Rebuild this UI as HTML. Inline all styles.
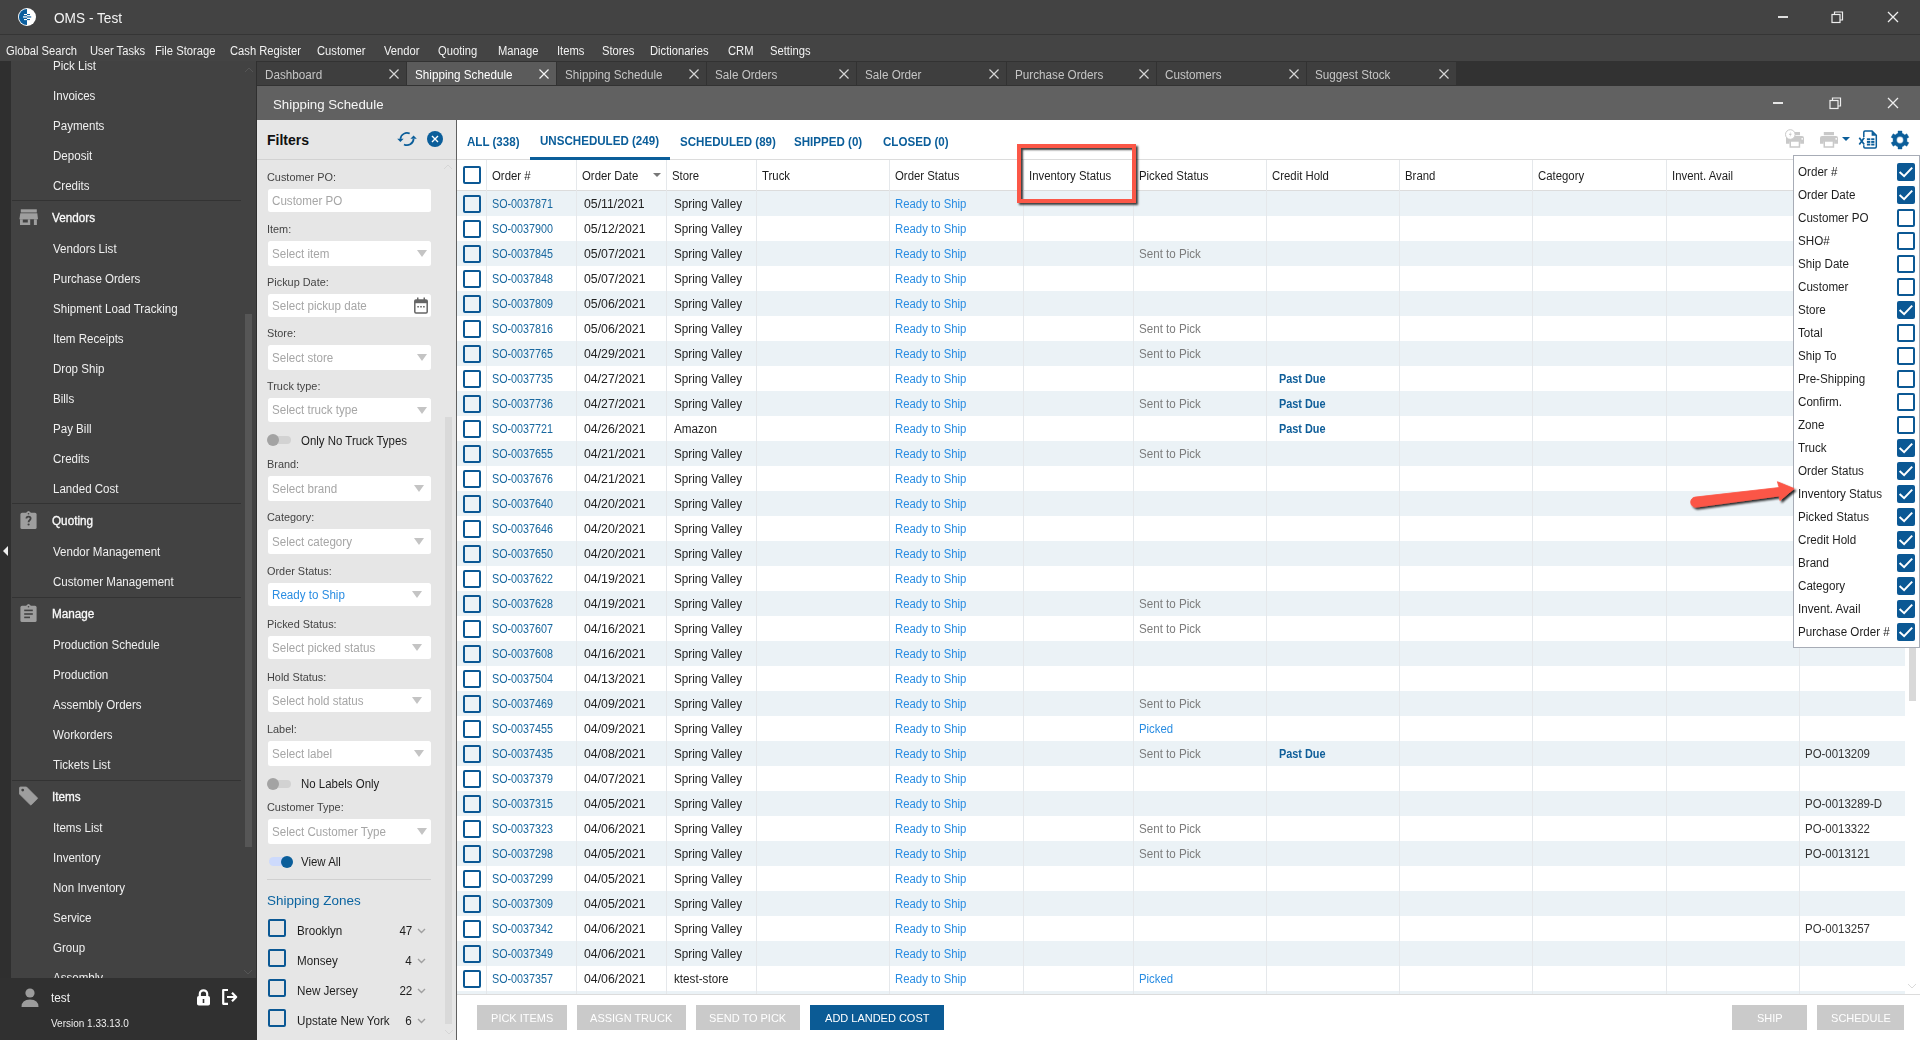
<!DOCTYPE html><html><head><meta charset="utf-8"><title>OMS - Test</title><style>
*{box-sizing:border-box;margin:0;padding:0}
html,body{width:1920px;height:1040px;overflow:hidden;background:#fff}
body{position:relative;font-family:"Liberation Sans",sans-serif;font-size:12px;color:#222}
.a{position:absolute}
.t{position:absolute;white-space:nowrap;line-height:1}
.cb{position:absolute;width:18px;height:18px;border:2px solid #0b5894;border-radius:2px}
.cbx{position:absolute;width:18px;height:18px;background:#0b5894;border-radius:2px}
.dd{position:absolute;width:0;height:0;border-left:5px solid transparent;border-right:5px solid transparent;border-top:7.5px solid #c4c4c4}
.inp{position:absolute;left:267.5px;width:163.5px;height:24px;background:#fff;border-radius:2.5px}
</style></head><body>
<div class="a" style="left:0px;top:61px;width:257px;height:979px;background:#424242;"></div>
<div class="a" style="left:0px;top:61px;width:11px;height:979px;background:#2f2f2f;"></div>
<div class="a" style="left:256px;top:61px;width:1px;height:979px;background:#2f2f2f;"></div>
<div class="t" style="left:53px;top:59.84px;font-size:12px;color:#f0f0f0;transform:scaleX(0.963);transform-origin:0 0;">Pick List</div>
<div class="t" style="left:53px;top:89.84px;font-size:12px;color:#f0f0f0;transform:scaleX(0.963);transform-origin:0 0;">Invoices</div>
<div class="t" style="left:53px;top:119.84px;font-size:12px;color:#f0f0f0;transform:scaleX(0.963);transform-origin:0 0;">Payments</div>
<div class="t" style="left:53px;top:149.84px;font-size:12px;color:#f0f0f0;transform:scaleX(0.963);transform-origin:0 0;">Deposit</div>
<div class="t" style="left:53px;top:179.84px;font-size:12px;color:#f0f0f0;transform:scaleX(0.963);transform-origin:0 0;">Credits</div>
<div class="t" style="left:53px;top:242.84px;font-size:12px;color:#f0f0f0;transform:scaleX(0.963);transform-origin:0 0;">Vendors List</div>
<div class="t" style="left:53px;top:272.84px;font-size:12px;color:#f0f0f0;transform:scaleX(0.963);transform-origin:0 0;">Purchase Orders</div>
<div class="t" style="left:53px;top:302.84px;font-size:12px;color:#f0f0f0;transform:scaleX(0.963);transform-origin:0 0;">Shipment Load Tracking</div>
<div class="t" style="left:53px;top:332.84px;font-size:12px;color:#f0f0f0;transform:scaleX(0.963);transform-origin:0 0;">Item Receipts</div>
<div class="t" style="left:53px;top:362.84px;font-size:12px;color:#f0f0f0;transform:scaleX(0.963);transform-origin:0 0;">Drop Ship</div>
<div class="t" style="left:53px;top:392.84px;font-size:12px;color:#f0f0f0;transform:scaleX(0.963);transform-origin:0 0;">Bills</div>
<div class="t" style="left:53px;top:422.84px;font-size:12px;color:#f0f0f0;transform:scaleX(0.963);transform-origin:0 0;">Pay Bill</div>
<div class="t" style="left:53px;top:452.84px;font-size:12px;color:#f0f0f0;transform:scaleX(0.963);transform-origin:0 0;">Credits</div>
<div class="t" style="left:53px;top:482.84px;font-size:12px;color:#f0f0f0;transform:scaleX(0.963);transform-origin:0 0;">Landed Cost</div>
<div class="t" style="left:53px;top:545.84px;font-size:12px;color:#f0f0f0;transform:scaleX(0.963);transform-origin:0 0;">Vendor Management</div>
<div class="t" style="left:53px;top:575.84px;font-size:12px;color:#f0f0f0;transform:scaleX(0.963);transform-origin:0 0;">Customer Management</div>
<div class="t" style="left:53px;top:638.84px;font-size:12px;color:#f0f0f0;transform:scaleX(0.963);transform-origin:0 0;">Production Schedule</div>
<div class="t" style="left:53px;top:668.84px;font-size:12px;color:#f0f0f0;transform:scaleX(0.963);transform-origin:0 0;">Production</div>
<div class="t" style="left:53px;top:698.84px;font-size:12px;color:#f0f0f0;transform:scaleX(0.963);transform-origin:0 0;">Assembly Orders</div>
<div class="t" style="left:53px;top:728.84px;font-size:12px;color:#f0f0f0;transform:scaleX(0.963);transform-origin:0 0;">Workorders</div>
<div class="t" style="left:53px;top:758.84px;font-size:12px;color:#f0f0f0;transform:scaleX(0.963);transform-origin:0 0;">Tickets List</div>
<div class="t" style="left:53px;top:821.84px;font-size:12px;color:#f0f0f0;transform:scaleX(0.963);transform-origin:0 0;">Items List</div>
<div class="t" style="left:53px;top:851.84px;font-size:12px;color:#f0f0f0;transform:scaleX(0.963);transform-origin:0 0;">Inventory</div>
<div class="t" style="left:53px;top:881.84px;font-size:12px;color:#f0f0f0;transform:scaleX(0.963);transform-origin:0 0;">Non Inventory</div>
<div class="t" style="left:53px;top:911.84px;font-size:12px;color:#f0f0f0;transform:scaleX(0.963);transform-origin:0 0;">Service</div>
<div class="t" style="left:53px;top:941.84px;font-size:12px;color:#f0f0f0;transform:scaleX(0.963);transform-origin:0 0;">Group</div>
<div class="t" style="left:53px;top:971.84px;font-size:12px;color:#f0f0f0;transform:scaleX(0.963);transform-origin:0 0;">Assembly</div>
<div class="a" style="left:12px;top:200px;width:229px;height:1px;background:#333333;"></div>
<div class="a" style="left:12px;top:503px;width:229px;height:1px;background:#333333;"></div>
<div class="a" style="left:12px;top:597px;width:229px;height:1px;background:#333333;"></div>
<div class="a" style="left:12px;top:780px;width:229px;height:1px;background:#333333;"></div>
<div class="t" style="left:52px;top:211.84px;font-size:12px;color:#fafafa;transform:scaleX(0.977);transform-origin:0 0;-webkit-text-stroke:0.3px #fafafa;">Vendors</div>
<div class="t" style="left:52px;top:514.84px;font-size:12px;color:#fafafa;transform:scaleX(0.977);transform-origin:0 0;-webkit-text-stroke:0.3px #fafafa;">Quoting</div>
<div class="t" style="left:52px;top:607.84px;font-size:12px;color:#fafafa;transform:scaleX(0.977);transform-origin:0 0;-webkit-text-stroke:0.3px #fafafa;">Manage</div>
<div class="t" style="left:52px;top:790.84px;font-size:12px;color:#fafafa;transform:scaleX(0.977);transform-origin:0 0;-webkit-text-stroke:0.3px #fafafa;">Items</div>
<svg class="a" style="left:19px;top:209px" width="20" height="17" viewBox="0 0 20 17"><rect x="1.8" y="0.3" width="16" height="3.2" fill="#9e9e9e"/><path d="M1.3 4.2 H18.3 L19 10.3 H0.4 Z" fill="#9e9e9e"/><path d="M1 10.3 H11.2 V16 H1 Z M3.8 10.6 V13.6 H8.8 V10.6 Z" fill="#9e9e9e" fill-rule="evenodd"/><rect x="14.9" y="10.3" width="3" height="5.7" fill="#9e9e9e"/></svg>
<svg class="a" style="left:20px;top:511px" width="18" height="19" viewBox="0 0 18 19"><rect x="0.4" y="1.8" width="16.2" height="16.2" rx="1.6" fill="#9e9e9e"/><path d="M5.8 2.5 Q7 0 8.5 0 Q10 0 11.2 2.5 Z" fill="#9e9e9e"/><circle cx="8.5" cy="2.7" r="0.8" fill="#424242"/><path d="M6.4 7.6 Q6.4 5.6 8.5 5.6 Q10.6 5.6 10.6 7.5 Q10.6 8.7 9.4 9.4 Q8.6 9.9 8.6 11.2" fill="none" stroke="#424242" stroke-width="1.8"/><circle cx="8.6" cy="13.5" r="1.1" fill="#424242"/></svg>
<svg class="a" style="left:20px;top:604px" width="18" height="19" viewBox="0 0 18 19"><rect x="0.4" y="1.8" width="16.2" height="16.2" rx="1.6" fill="#9e9e9e"/><path d="M5.8 2.5 Q7 0 8.5 0 Q10 0 11.2 2.5 Z" fill="#9e9e9e"/><circle cx="8.5" cy="2.7" r="0.8" fill="#424242"/><rect x="4.2" y="5.6" width="8.6" height="1.6" fill="#424242"/><rect x="4.2" y="9.2" width="8.6" height="1.6" fill="#424242"/><rect x="4.2" y="12.6" width="5.8" height="1.6" fill="#424242"/></svg>
<svg class="a" style="left:18px;top:786px" width="21" height="21" viewBox="0 0 21 21"><path d="M1.5 2 Q1.5 1 2.5 1 L8.5 1 L19.3 11.8 Q19.8 12.3 19.3 12.8 L13.3 18.8 Q12.8 19.3 12.3 18.8 L1.5 8 Z" fill="#9e9e9e" stroke="#9e9e9e" stroke-width="0.8" stroke-linejoin="round"/><circle cx="4.7" cy="4.1" r="1.4" fill="#424242"/></svg>
<div class="a" style="left:245px;top:314px;width:7px;height:533px;background:#565656;"></div>
<svg class="a" style="left:244px;top:67px" width="10" height="6" viewBox="0 0 10 6"><path d="M1 5 L5 1 L9 5" fill="none" stroke="#555" stroke-width="1"/></svg>
<svg class="a" style="left:243px;top:969px" width="10" height="6" viewBox="0 0 10 6"><path d="M1 1 L5 5 L9 1" fill="none" stroke="#555" stroke-width="1"/></svg>
<div class="a" style="left:3px;top:546px;width:0;height:0;border-top:5px solid transparent;border-bottom:5px solid transparent;border-right:5px solid #f0f0f0"></div>
<div class="a" style="left:0px;top:978px;width:256px;height:62px;background:#303030;"></div>
<svg class="a" style="left:20px;top:988px" width="20" height="19" viewBox="0 0 20 19"><circle cx="10" cy="5" r="4.6" fill="#9c9c9c"/><path d="M1.5 19 Q1.5 11.5 10 11.5 Q18.5 11.5 18.5 19 Z" fill="#9c9c9c"/></svg>
<div class="t" style="left:51px;top:991.84px;font-size:12px;color:#f2f2f2;transform:scaleX(0.982);transform-origin:0 0;">test</div>
<svg class="a" style="left:196px;top:989px" width="15" height="17" viewBox="0 0 15 17"><path d="M3.8 7.5 V5 A3.7 3.7 0 0 1 11.2 5 V7.5" fill="none" stroke="#fff" stroke-width="2.2"/><rect x="1" y="7" width="13" height="9.5" rx="1.8" fill="#fff"/><rect x="6.7" y="10" width="1.6" height="4" fill="#303030"/></svg>
<svg class="a" style="left:221px;top:988px" width="18" height="18" viewBox="0 0 18 18"><path d="M7 2 H2.2 V15.8 H7" fill="none" stroke="#fff" stroke-width="2.2" stroke-linejoin="round"/><path d="M6 9 H15 M11 4.8 L15.2 9 L11 13.2" fill="none" stroke="#fff" stroke-width="2.2" stroke-linejoin="round"/></svg>
<div class="t" style="left:51px;top:1017.69px;font-size:11px;color:#eeeeee;transform:scaleX(0.908);transform-origin:0 0;">Version 1.33.13.0</div>
<div class="a" style="left:0px;top:0px;width:1920px;height:34px;background:#434343;"></div>
<div class="a" style="left:0px;top:34px;width:1920px;height:1px;background:#353535;"></div>
<div class="a" style="left:0px;top:35px;width:1920px;height:26px;background:#444444;"></div>
<svg class="a" style="left:17px;top:7px" width="20" height="20" viewBox="0 0 20 20">
<circle cx="10" cy="10" r="9" fill="#fff"/>
<path d="M10 1.9 A8.1 8.1 0 0 0 10 18.1 Z" fill="#0b5e9e"/>
<rect x="7" y="7" width="3" height="1.1" fill="#fff"/><rect x="6" y="9.2" width="4" height="1.5" fill="#dbe7f0"/><rect x="7" y="12" width="3" height="1.1" fill="#fff"/>
<rect x="10" y="7" width="3" height="1.1" fill="#0b5e9e"/><rect x="10" y="9.2" width="4.2" height="1.5" fill="#3d7fb3"/><rect x="10" y="12" width="3" height="1.1" fill="#0b5e9e"/>
</svg>
<div class="t" style="left:54px;top:11.15px;font-size:14px;color:#f4f4f4;transform:scaleX(0.975);transform-origin:0 0;">OMS - Test</div>
<div class="a" style="left:1778px;top:16px;width:10px;height:1.5px;background:#dedede;"></div>
<svg class="a" style="left:1831px;top:11px" width="13" height="13" viewBox="0 0 13 13"><rect x="1" y="3.5" width="8" height="8" fill="none" stroke="#eee" stroke-width="1.2"/><path d="M3.5 3.5 V1 H11.5 V9 H9" fill="none" stroke="#eee" stroke-width="1.2"/></svg>
<svg class="a" style="left:1887px;top:11px" width="12" height="12" viewBox="0 0 12 12"><path d="M1 1 L11 11 M11 1 L1 11" stroke="#eee" stroke-width="1.3"/></svg>
<div class="t" style="left:6px;top:44.84px;font-size:12px;color:#f2f2f2;transform:scaleX(0.934);transform-origin:0 0;">Global Search</div>
<div class="t" style="left:90px;top:44.84px;font-size:12px;color:#f2f2f2;transform:scaleX(0.934);transform-origin:0 0;">User Tasks</div>
<div class="t" style="left:155px;top:44.84px;font-size:12px;color:#f2f2f2;transform:scaleX(0.934);transform-origin:0 0;">File Storage</div>
<div class="t" style="left:230px;top:44.84px;font-size:12px;color:#f2f2f2;transform:scaleX(0.934);transform-origin:0 0;">Cash Register</div>
<div class="t" style="left:317px;top:44.84px;font-size:12px;color:#f2f2f2;transform:scaleX(0.934);transform-origin:0 0;">Customer</div>
<div class="t" style="left:384px;top:44.84px;font-size:12px;color:#f2f2f2;transform:scaleX(0.934);transform-origin:0 0;">Vendor</div>
<div class="t" style="left:438px;top:44.84px;font-size:12px;color:#f2f2f2;transform:scaleX(0.934);transform-origin:0 0;">Quoting</div>
<div class="t" style="left:498px;top:44.84px;font-size:12px;color:#f2f2f2;transform:scaleX(0.934);transform-origin:0 0;">Manage</div>
<div class="t" style="left:557px;top:44.84px;font-size:12px;color:#f2f2f2;transform:scaleX(0.934);transform-origin:0 0;">Items</div>
<div class="t" style="left:602px;top:44.84px;font-size:12px;color:#f2f2f2;transform:scaleX(0.934);transform-origin:0 0;">Stores</div>
<div class="t" style="left:650px;top:44.84px;font-size:12px;color:#f2f2f2;transform:scaleX(0.934);transform-origin:0 0;">Dictionaries</div>
<div class="t" style="left:728px;top:44.84px;font-size:12px;color:#f2f2f2;transform:scaleX(0.934);transform-origin:0 0;">CRM</div>
<div class="t" style="left:770px;top:44.84px;font-size:12px;color:#f2f2f2;transform:scaleX(0.934);transform-origin:0 0;">Settings</div>
<div class="a" style="left:257px;top:61px;width:1663px;height:25px;background:#323232;"></div>
<div class="a" style="left:257px;top:62px;width:149px;height:23px;background:#3e3e3e;"></div>
<div class="t" style="left:265px;top:68.84px;font-size:12px;color:#c6c6c6;transform:scaleX(0.974);transform-origin:0 0;">Dashboard</div>
<svg class="a" style="left:389px;top:69px" width="10" height="10" viewBox="0 0 10 10"><path d="M0.5 0.5 L9.5 9.5 M9.5 0.5 L0.5 9.5" stroke="#d6d6d6" stroke-width="1.2"/></svg>
<div class="a" style="left:407px;top:62px;width:149px;height:23px;background:#5b5b5b;"></div>
<div class="t" style="left:415px;top:68.84px;font-size:12px;color:#ffffff;transform:scaleX(0.974);transform-origin:0 0;">Shipping Schedule</div>
<svg class="a" style="left:539px;top:69px" width="10" height="10" viewBox="0 0 10 10"><path d="M0.5 0.5 L9.5 9.5 M9.5 0.5 L0.5 9.5" stroke="#f4f4f4" stroke-width="1.2"/></svg>
<div class="a" style="left:557px;top:62px;width:149px;height:23px;background:#3e3e3e;"></div>
<div class="t" style="left:565px;top:68.84px;font-size:12px;color:#c6c6c6;transform:scaleX(0.974);transform-origin:0 0;">Shipping Schedule</div>
<svg class="a" style="left:689px;top:69px" width="10" height="10" viewBox="0 0 10 10"><path d="M0.5 0.5 L9.5 9.5 M9.5 0.5 L0.5 9.5" stroke="#d6d6d6" stroke-width="1.2"/></svg>
<div class="a" style="left:707px;top:62px;width:149px;height:23px;background:#3e3e3e;"></div>
<div class="t" style="left:715px;top:68.84px;font-size:12px;color:#c6c6c6;transform:scaleX(0.974);transform-origin:0 0;">Sale Orders</div>
<svg class="a" style="left:839px;top:69px" width="10" height="10" viewBox="0 0 10 10"><path d="M0.5 0.5 L9.5 9.5 M9.5 0.5 L0.5 9.5" stroke="#d6d6d6" stroke-width="1.2"/></svg>
<div class="a" style="left:857px;top:62px;width:149px;height:23px;background:#3e3e3e;"></div>
<div class="t" style="left:865px;top:68.84px;font-size:12px;color:#c6c6c6;transform:scaleX(0.974);transform-origin:0 0;">Sale Order</div>
<svg class="a" style="left:989px;top:69px" width="10" height="10" viewBox="0 0 10 10"><path d="M0.5 0.5 L9.5 9.5 M9.5 0.5 L0.5 9.5" stroke="#d6d6d6" stroke-width="1.2"/></svg>
<div class="a" style="left:1007px;top:62px;width:149px;height:23px;background:#3e3e3e;"></div>
<div class="t" style="left:1015px;top:68.84px;font-size:12px;color:#c6c6c6;transform:scaleX(0.974);transform-origin:0 0;">Purchase Orders</div>
<svg class="a" style="left:1139px;top:69px" width="10" height="10" viewBox="0 0 10 10"><path d="M0.5 0.5 L9.5 9.5 M9.5 0.5 L0.5 9.5" stroke="#d6d6d6" stroke-width="1.2"/></svg>
<div class="a" style="left:1157px;top:62px;width:149px;height:23px;background:#3e3e3e;"></div>
<div class="t" style="left:1165px;top:68.84px;font-size:12px;color:#c6c6c6;transform:scaleX(0.974);transform-origin:0 0;">Customers</div>
<svg class="a" style="left:1289px;top:69px" width="10" height="10" viewBox="0 0 10 10"><path d="M0.5 0.5 L9.5 9.5 M9.5 0.5 L0.5 9.5" stroke="#d6d6d6" stroke-width="1.2"/></svg>
<div class="a" style="left:1307px;top:62px;width:149px;height:23px;background:#3e3e3e;"></div>
<div class="t" style="left:1315px;top:68.84px;font-size:12px;color:#c6c6c6;transform:scaleX(0.974);transform-origin:0 0;">Suggest Stock</div>
<svg class="a" style="left:1439px;top:69px" width="10" height="10" viewBox="0 0 10 10"><path d="M0.5 0.5 L9.5 9.5 M9.5 0.5 L0.5 9.5" stroke="#d6d6d6" stroke-width="1.2"/></svg>
<div class="a" style="left:257px;top:86px;width:1663px;height:34px;background:#616161;"></div>
<div class="t" style="left:273px;top:97.74px;font-size:13.3px;color:#f6f6f6;transform:scaleX(0.997);transform-origin:0 0;">Shipping Schedule</div>
<div class="a" style="left:1773px;top:102px;width:10px;height:1.5px;background:#e6e6e6;"></div>
<svg class="a" style="left:1829px;top:97px" width="13" height="13" viewBox="0 0 13 13"><rect x="1" y="3.5" width="8" height="8" fill="none" stroke="#eee" stroke-width="1.2"/><path d="M3.5 3.5 V1 H11.5 V9 H9" fill="none" stroke="#eee" stroke-width="1.2"/></svg>
<svg class="a" style="left:1887px;top:97px" width="12" height="12" viewBox="0 0 12 12"><path d="M1 1 L11 11 M11 1 L1 11" stroke="#eee" stroke-width="1.3"/></svg>
<div class="a" style="left:257px;top:120px;width:199px;height:920px;background:#e6e6e6;"></div>
<div class="a" style="left:456px;top:120px;width:1px;height:920px;background:#606060;"></div>
<div class="t" style="left:267px;top:133.15px;font-size:14px;color:#111111;font-weight:bold;transform:scaleX(1.000);transform-origin:0 0;">Filters</div>
<svg class="a" style="left:397px;top:131px" width="20" height="16" viewBox="0 0 20 16">
<path d="M12.7 2.6 A6.6 6.6 0 0 0 3.4 7.9" fill="none" stroke="#0b5e9a" stroke-width="1.7"/>
<path d="M0.2 7.8 L6.6 7.8 L3.4 11.1 Z" fill="#0b5e9a"/>
<path d="M7 13.4 A6.6 6.6 0 0 0 16.6 7.9" fill="none" stroke="#0b5e9a" stroke-width="1.7"/>
<path d="M13.4 7.7 L19.8 7.7 L16.6 4.5 Z" fill="#0b5e9a"/>
</svg>
<svg class="a" style="left:427px;top:131px" width="16" height="16" viewBox="0 0 16 16"><circle cx="8" cy="8" r="8" fill="#0b5e9a"/><path d="M5 5 L11 11 M11 5 L5 11" stroke="#fff" stroke-width="1.4"/></svg>
<div class="a" style="left:257px;top:159px;width:199px;height:1px;background:#d2d2d2;"></div>
<svg class="a" style="left:443px;top:164px" width="10" height="6" viewBox="0 0 10 6"><path d="M1 5 L5 1 L9 5" fill="none" stroke="#d6d6d6" stroke-width="1"/></svg>
<div class="a" style="left:445px;top:417px;width:7px;height:607px;background:#d9d9d9;"></div>
<svg class="a" style="left:444px;top:1029px" width="10" height="6" viewBox="0 0 10 6"><path d="M1 1 L5 5 L9 1" fill="none" stroke="#d6d6d6" stroke-width="1"/></svg>
<div class="t" style="left:267px;top:172.19px;font-size:11px;color:#444444;transform:scaleX(0.990);transform-origin:0 0;">Customer PO:</div>
<div class="inp" style="top:189px;height:23px"></div>
<div class="t" style="left:272px;top:194.84px;font-size:12px;color:#a6a6a6;transform:scaleX(0.967);transform-origin:0 0;">Customer PO</div>
<div class="t" style="left:267px;top:224.19px;font-size:11px;color:#444444;transform:scaleX(0.990);transform-origin:0 0;">Item:</div>
<div class="inp" style="top:241px;height:25px"></div>
<div class="t" style="left:272px;top:247.84px;font-size:12px;color:#a6a6a6;transform:scaleX(0.967);transform-origin:0 0;">Select item</div>
<div class="dd" style="left:417px;top:250.0px"></div>
<div class="t" style="left:267px;top:277.19px;font-size:11px;color:#444444;transform:scaleX(0.990);transform-origin:0 0;">Pickup Date:</div>
<div class="inp" style="top:294px;height:23px"></div>
<div class="t" style="left:272px;top:299.84px;font-size:12px;color:#a6a6a6;transform:scaleX(0.967);transform-origin:0 0;">Select pickup date</div>
<svg class="a" style="left:414px;top:297px" width="14" height="17" viewBox="0 0 14 17"><rect x="0.8" y="3" width="12.4" height="13" rx="1.2" fill="none" stroke="#666" stroke-width="1.5"/><rect x="0.8" y="3" width="12.4" height="3.2" fill="#666"/><rect x="3" y="0.5" width="1.5" height="3.5" fill="#666"/><rect x="9.5" y="0.5" width="1.5" height="3.5" fill="#666"/><rect x="3.3" y="9" width="1.6" height="1.5" fill="#666"/><rect x="6.2" y="9" width="1.6" height="1.5" fill="#666"/><rect x="9.1" y="9" width="1.6" height="1.5" fill="#666"/></svg>
<div class="t" style="left:267px;top:328.19px;font-size:11px;color:#444444;transform:scaleX(0.990);transform-origin:0 0;">Store:</div>
<div class="inp" style="top:345px;height:25px"></div>
<div class="t" style="left:272px;top:351.84px;font-size:12px;color:#a6a6a6;transform:scaleX(0.967);transform-origin:0 0;">Select store</div>
<div class="dd" style="left:417px;top:354.0px"></div>
<div class="t" style="left:267px;top:381.19px;font-size:11px;color:#444444;transform:scaleX(0.990);transform-origin:0 0;">Truck type:</div>
<div class="inp" style="top:398px;height:24px"></div>
<div class="t" style="left:272px;top:404.34px;font-size:12px;color:#a6a6a6;transform:scaleX(0.967);transform-origin:0 0;">Select truck type</div>
<div class="dd" style="left:417px;top:406.5px"></div>
<div class="t" style="left:267px;top:459.19px;font-size:11px;color:#444444;transform:scaleX(0.990);transform-origin:0 0;">Brand:</div>
<div class="inp" style="top:476px;height:25px"></div>
<div class="t" style="left:272px;top:482.84px;font-size:12px;color:#a6a6a6;transform:scaleX(0.967);transform-origin:0 0;">Select brand</div>
<div class="dd" style="left:413.5px;top:485.0px"></div>
<div class="t" style="left:267px;top:512.19px;font-size:11px;color:#444444;transform:scaleX(0.990);transform-origin:0 0;">Category:</div>
<div class="inp" style="top:529px;height:25px"></div>
<div class="t" style="left:272px;top:535.84px;font-size:12px;color:#a6a6a6;transform:scaleX(0.967);transform-origin:0 0;">Select category</div>
<div class="dd" style="left:413.5px;top:538.0px"></div>
<div class="t" style="left:267px;top:566.19px;font-size:11px;color:#444444;transform:scaleX(0.990);transform-origin:0 0;">Order Status:</div>
<div class="inp" style="top:583px;height:23px"></div>
<div class="t" style="left:272px;top:588.84px;font-size:12px;color:#2a8de2;transform:scaleX(0.967);transform-origin:0 0;">Ready to Ship</div>
<div class="dd" style="left:412.3px;top:591.0px"></div>
<div class="t" style="left:267px;top:619.19px;font-size:11px;color:#444444;transform:scaleX(0.990);transform-origin:0 0;">Picked Status:</div>
<div class="inp" style="top:636px;height:23px"></div>
<div class="t" style="left:272px;top:641.84px;font-size:12px;color:#a6a6a6;transform:scaleX(0.967);transform-origin:0 0;">Select picked status</div>
<div class="dd" style="left:412.3px;top:644.0px"></div>
<div class="t" style="left:267px;top:672.19px;font-size:11px;color:#444444;transform:scaleX(0.990);transform-origin:0 0;">Hold Status:</div>
<div class="inp" style="top:689px;height:23px"></div>
<div class="t" style="left:272px;top:694.84px;font-size:12px;color:#a6a6a6;transform:scaleX(0.967);transform-origin:0 0;">Select hold status</div>
<div class="dd" style="left:412.3px;top:697.0px"></div>
<div class="t" style="left:267px;top:724.19px;font-size:11px;color:#444444;transform:scaleX(0.990);transform-origin:0 0;">Label:</div>
<div class="inp" style="top:741px;height:25px"></div>
<div class="t" style="left:272px;top:747.84px;font-size:12px;color:#a6a6a6;transform:scaleX(0.967);transform-origin:0 0;">Select label</div>
<div class="dd" style="left:413.5px;top:750.0px"></div>
<div class="t" style="left:267px;top:802.19px;font-size:11px;color:#444444;transform:scaleX(0.990);transform-origin:0 0;">Customer Type:</div>
<div class="inp" style="top:819px;height:25px"></div>
<div class="t" style="left:272px;top:825.84px;font-size:12px;color:#a6a6a6;transform:scaleX(0.967);transform-origin:0 0;">Select Customer Type</div>
<div class="dd" style="left:417px;top:828.0px"></div>
<div class="a" style="left:269px;top:436px;width:22px;height:8px;background:#d2d2d2;border-radius:4px"></div><div class="a" style="left:267px;top:434px;width:12px;height:12px;background:#a3a3a3;border-radius:6px"></div>
<div class="t" style="left:301px;top:434.84px;font-size:12px;color:#1e1e1e;transform:scaleX(0.954);transform-origin:0 0;">Only No Truck Types</div>
<div class="a" style="left:269px;top:780px;width:22px;height:8px;background:#d2d2d2;border-radius:4px"></div><div class="a" style="left:267px;top:778px;width:12px;height:12px;background:#a3a3a3;border-radius:6px"></div>
<div class="t" style="left:301px;top:777.84px;font-size:12px;color:#1e1e1e;transform:scaleX(0.954);transform-origin:0 0;">No Labels Only</div>
<div class="a" style="left:269px;top:857px;width:20px;height:9px;background:#cddafc;border-radius:4.5px"></div><div class="a" style="left:281px;top:855.5px;width:12px;height:12px;background:#0a5e9a;border-radius:6px"></div>
<div class="t" style="left:301px;top:855.84px;font-size:12px;color:#1e1e1e;transform:scaleX(0.954);transform-origin:0 0;">View All</div>
<div class="a" style="left:267px;top:879px;width:164px;height:1px;background:#d0d0d0;"></div>
<div class="t" style="left:267px;top:893.74px;font-size:13.3px;color:#0b64a0;transform:scaleX(1.014);transform-origin:0 0;">Shipping Zones</div>
<div class="cb" style="left:268px;top:919px"></div>
<div class="t" style="left:297px;top:924.84px;font-size:12px;color:#1e1e1e;transform:scaleX(0.971);transform-origin:0 0;">Brooklyn</div>
<div class="t" style="left:398.65px;top:924.84px;font-size:12px;color:#1e1e1e;transform:scaleX(0.971);transform-origin:100% 0;">47</div>
<svg class="a" style="left:417px;top:928px" width="9" height="6" viewBox="0 0 9 6"><path d="M1 1 L4.5 4.5 L8 1" fill="none" stroke="#a0a0a0" stroke-width="1.4"/></svg>
<div class="cb" style="left:268px;top:949px"></div>
<div class="t" style="left:297px;top:954.84px;font-size:12px;color:#1e1e1e;transform:scaleX(0.971);transform-origin:0 0;">Monsey</div>
<div class="t" style="left:405.33px;top:954.84px;font-size:12px;color:#1e1e1e;transform:scaleX(0.971);transform-origin:100% 0;">4</div>
<svg class="a" style="left:417px;top:958px" width="9" height="6" viewBox="0 0 9 6"><path d="M1 1 L4.5 4.5 L8 1" fill="none" stroke="#a0a0a0" stroke-width="1.4"/></svg>
<div class="cb" style="left:268px;top:979px"></div>
<div class="t" style="left:297px;top:984.84px;font-size:12px;color:#1e1e1e;transform:scaleX(0.971);transform-origin:0 0;">New Jersey</div>
<div class="t" style="left:398.65px;top:984.84px;font-size:12px;color:#1e1e1e;transform:scaleX(0.971);transform-origin:100% 0;">22</div>
<svg class="a" style="left:417px;top:988px" width="9" height="6" viewBox="0 0 9 6"><path d="M1 1 L4.5 4.5 L8 1" fill="none" stroke="#a0a0a0" stroke-width="1.4"/></svg>
<div class="cb" style="left:268px;top:1009px"></div>
<div class="t" style="left:297px;top:1014.84px;font-size:12px;color:#1e1e1e;transform:scaleX(0.971);transform-origin:0 0;">Upstate New York</div>
<div class="t" style="left:405.33px;top:1014.84px;font-size:12px;color:#1e1e1e;transform:scaleX(0.971);transform-origin:100% 0;">6</div>
<svg class="a" style="left:417px;top:1018px" width="9" height="6" viewBox="0 0 9 6"><path d="M1 1 L4.5 4.5 L8 1" fill="none" stroke="#a0a0a0" stroke-width="1.4"/></svg>
<div class="t" style="left:467px;top:135.84px;font-size:12px;color:#0b5e9a;font-weight:bold;transform:scaleX(0.965);transform-origin:0 0;">ALL (338)</div>
<div class="t" style="left:540px;top:134.84px;font-size:12px;color:#0b5e9a;font-weight:bold;transform:scaleX(0.965);transform-origin:0 0;">UNSCHEDULED (249)</div>
<div class="t" style="left:680px;top:135.84px;font-size:12px;color:#0b5e9a;font-weight:bold;transform:scaleX(0.965);transform-origin:0 0;">SCHEDULED (89)</div>
<div class="t" style="left:794px;top:135.84px;font-size:12px;color:#0b5e9a;font-weight:bold;transform:scaleX(0.965);transform-origin:0 0;">SHIPPED (0)</div>
<div class="t" style="left:883px;top:135.84px;font-size:12px;color:#0b5e9a;font-weight:bold;transform:scaleX(0.965);transform-origin:0 0;">CLOSED (0)</div>
<div class="a" style="left:457px;top:159px;width:1463px;height:1px;background:#dcdcdc;"></div>
<div class="a" style="left:530px;top:157px;width:140px;height:3px;background:#0b5e9a;"></div>
<div class="a" style="left:457px;top:190px;width:1448px;height:1px;background:#dcdcdc;"></div>
<div class="a" style="left:457px;top:191px;width:1448px;height:25px;background:#ebf2f6;"></div>
<div class="a" style="left:457px;top:241px;width:1448px;height:25px;background:#ebf2f6;"></div>
<div class="a" style="left:457px;top:291px;width:1448px;height:25px;background:#ebf2f6;"></div>
<div class="a" style="left:457px;top:341px;width:1448px;height:25px;background:#ebf2f6;"></div>
<div class="a" style="left:457px;top:391px;width:1448px;height:25px;background:#ebf2f6;"></div>
<div class="a" style="left:457px;top:441px;width:1448px;height:25px;background:#ebf2f6;"></div>
<div class="a" style="left:457px;top:491px;width:1448px;height:25px;background:#ebf2f6;"></div>
<div class="a" style="left:457px;top:541px;width:1448px;height:25px;background:#ebf2f6;"></div>
<div class="a" style="left:457px;top:591px;width:1448px;height:25px;background:#ebf2f6;"></div>
<div class="a" style="left:457px;top:641px;width:1448px;height:25px;background:#ebf2f6;"></div>
<div class="a" style="left:457px;top:691px;width:1448px;height:25px;background:#ebf2f6;"></div>
<div class="a" style="left:457px;top:741px;width:1448px;height:25px;background:#ebf2f6;"></div>
<div class="a" style="left:457px;top:791px;width:1448px;height:25px;background:#ebf2f6;"></div>
<div class="a" style="left:457px;top:841px;width:1448px;height:25px;background:#ebf2f6;"></div>
<div class="a" style="left:457px;top:891px;width:1448px;height:25px;background:#ebf2f6;"></div>
<div class="a" style="left:457px;top:941px;width:1448px;height:25px;background:#ebf2f6;"></div>
<div class="a" style="left:457px;top:991px;width:1448px;height:3px;background:#ebf2f6;"></div>
<div class="a" style="left:486px;top:160px;width:1px;height:834px;background:#e5e8eb;"></div>
<div class="a" style="left:576px;top:160px;width:1px;height:834px;background:#e5e8eb;"></div>
<div class="a" style="left:666px;top:160px;width:1px;height:834px;background:#e5e8eb;"></div>
<div class="a" style="left:756px;top:160px;width:1px;height:834px;background:#e5e8eb;"></div>
<div class="a" style="left:889px;top:160px;width:1px;height:834px;background:#e5e8eb;"></div>
<div class="a" style="left:1023px;top:160px;width:1px;height:834px;background:#e5e8eb;"></div>
<div class="a" style="left:1133px;top:160px;width:1px;height:834px;background:#e5e8eb;"></div>
<div class="a" style="left:1266px;top:160px;width:1px;height:834px;background:#e5e8eb;"></div>
<div class="a" style="left:1399px;top:160px;width:1px;height:834px;background:#e5e8eb;"></div>
<div class="a" style="left:1532px;top:160px;width:1px;height:834px;background:#e5e8eb;"></div>
<div class="a" style="left:1666px;top:160px;width:1px;height:834px;background:#e5e8eb;"></div>
<div class="a" style="left:1799px;top:160px;width:1px;height:834px;background:#e5e8eb;"></div>
<div class="a" style="left:457px;top:994px;width:1463px;height:1px;background:#dcdcdc;"></div>
<div class="cb" style="left:463px;top:166px"></div>
<div class="t" style="left:492px;top:169.84px;font-size:12px;color:#1e1e1e;transform:scaleX(0.948);transform-origin:0 0;">Order #</div>
<div class="t" style="left:582px;top:169.84px;font-size:12px;color:#1e1e1e;transform:scaleX(0.948);transform-origin:0 0;">Order Date</div>
<div class="t" style="left:672px;top:169.84px;font-size:12px;color:#1e1e1e;transform:scaleX(0.948);transform-origin:0 0;">Store</div>
<div class="t" style="left:762px;top:169.84px;font-size:12px;color:#1e1e1e;transform:scaleX(0.948);transform-origin:0 0;">Truck</div>
<div class="t" style="left:895px;top:169.84px;font-size:12px;color:#1e1e1e;transform:scaleX(0.948);transform-origin:0 0;">Order Status</div>
<div class="t" style="left:1029px;top:169.84px;font-size:12px;color:#1e1e1e;transform:scaleX(0.948);transform-origin:0 0;">Inventory Status</div>
<div class="t" style="left:1139px;top:169.84px;font-size:12px;color:#1e1e1e;transform:scaleX(0.948);transform-origin:0 0;">Picked Status</div>
<div class="t" style="left:1272px;top:169.84px;font-size:12px;color:#1e1e1e;transform:scaleX(0.948);transform-origin:0 0;">Credit Hold</div>
<div class="t" style="left:1405px;top:169.84px;font-size:12px;color:#1e1e1e;transform:scaleX(0.948);transform-origin:0 0;">Brand</div>
<div class="t" style="left:1538px;top:169.84px;font-size:12px;color:#1e1e1e;transform:scaleX(0.948);transform-origin:0 0;">Category</div>
<div class="t" style="left:1672px;top:169.84px;font-size:12px;color:#1e1e1e;transform:scaleX(0.948);transform-origin:0 0;">Invent. Avail</div>
<div class="a" style="left:653px;top:172.5px;width:0;height:0;border-left:4px solid transparent;border-right:4px solid transparent;border-top:4.5px solid #777"></div>
<div class="cb" style="left:463px;top:195px"></div>
<div class="t" style="left:492px;top:197.84px;font-size:12px;color:#17679f;transform:scaleX(0.896);transform-origin:0 0;">SO-0037871</div>
<div class="t" style="left:584px;top:197.84px;font-size:12px;color:#222222;transform:scaleX(1.024);transform-origin:0 0;">05/11/2021</div>
<div class="t" style="left:674px;top:197.84px;font-size:12px;color:#222222;transform:scaleX(0.974);transform-origin:0 0;">Spring Valley</div>
<div class="t" style="left:895px;top:197.84px;font-size:12px;color:#2a8de2;transform:scaleX(0.947);transform-origin:0 0;">Ready to Ship</div>
<div class="cb" style="left:463px;top:220px"></div>
<div class="t" style="left:492px;top:222.84px;font-size:12px;color:#17679f;transform:scaleX(0.896);transform-origin:0 0;">SO-0037900</div>
<div class="t" style="left:584px;top:222.84px;font-size:12px;color:#222222;transform:scaleX(1.024);transform-origin:0 0;">05/12/2021</div>
<div class="t" style="left:674px;top:222.84px;font-size:12px;color:#222222;transform:scaleX(0.974);transform-origin:0 0;">Spring Valley</div>
<div class="t" style="left:895px;top:222.84px;font-size:12px;color:#2a8de2;transform:scaleX(0.947);transform-origin:0 0;">Ready to Ship</div>
<div class="cb" style="left:463px;top:245px"></div>
<div class="t" style="left:492px;top:247.84px;font-size:12px;color:#17679f;transform:scaleX(0.896);transform-origin:0 0;">SO-0037845</div>
<div class="t" style="left:584px;top:247.84px;font-size:12px;color:#222222;transform:scaleX(1.024);transform-origin:0 0;">05/07/2021</div>
<div class="t" style="left:674px;top:247.84px;font-size:12px;color:#222222;transform:scaleX(0.974);transform-origin:0 0;">Spring Valley</div>
<div class="t" style="left:895px;top:247.84px;font-size:12px;color:#2a8de2;transform:scaleX(0.947);transform-origin:0 0;">Ready to Ship</div>
<div class="t" style="left:1139px;top:247.84px;font-size:12px;color:#7c7c7c;transform:scaleX(0.967);transform-origin:0 0;">Sent to Pick</div>
<div class="cb" style="left:463px;top:270px"></div>
<div class="t" style="left:492px;top:272.84px;font-size:12px;color:#17679f;transform:scaleX(0.896);transform-origin:0 0;">SO-0037848</div>
<div class="t" style="left:584px;top:272.84px;font-size:12px;color:#222222;transform:scaleX(1.024);transform-origin:0 0;">05/07/2021</div>
<div class="t" style="left:674px;top:272.84px;font-size:12px;color:#222222;transform:scaleX(0.974);transform-origin:0 0;">Spring Valley</div>
<div class="t" style="left:895px;top:272.84px;font-size:12px;color:#2a8de2;transform:scaleX(0.947);transform-origin:0 0;">Ready to Ship</div>
<div class="cb" style="left:463px;top:295px"></div>
<div class="t" style="left:492px;top:297.84px;font-size:12px;color:#17679f;transform:scaleX(0.896);transform-origin:0 0;">SO-0037809</div>
<div class="t" style="left:584px;top:297.84px;font-size:12px;color:#222222;transform:scaleX(1.024);transform-origin:0 0;">05/06/2021</div>
<div class="t" style="left:674px;top:297.84px;font-size:12px;color:#222222;transform:scaleX(0.974);transform-origin:0 0;">Spring Valley</div>
<div class="t" style="left:895px;top:297.84px;font-size:12px;color:#2a8de2;transform:scaleX(0.947);transform-origin:0 0;">Ready to Ship</div>
<div class="cb" style="left:463px;top:320px"></div>
<div class="t" style="left:492px;top:322.84px;font-size:12px;color:#17679f;transform:scaleX(0.896);transform-origin:0 0;">SO-0037816</div>
<div class="t" style="left:584px;top:322.84px;font-size:12px;color:#222222;transform:scaleX(1.024);transform-origin:0 0;">05/06/2021</div>
<div class="t" style="left:674px;top:322.84px;font-size:12px;color:#222222;transform:scaleX(0.974);transform-origin:0 0;">Spring Valley</div>
<div class="t" style="left:895px;top:322.84px;font-size:12px;color:#2a8de2;transform:scaleX(0.947);transform-origin:0 0;">Ready to Ship</div>
<div class="t" style="left:1139px;top:322.84px;font-size:12px;color:#7c7c7c;transform:scaleX(0.967);transform-origin:0 0;">Sent to Pick</div>
<div class="cb" style="left:463px;top:345px"></div>
<div class="t" style="left:492px;top:347.84px;font-size:12px;color:#17679f;transform:scaleX(0.896);transform-origin:0 0;">SO-0037765</div>
<div class="t" style="left:584px;top:347.84px;font-size:12px;color:#222222;transform:scaleX(1.024);transform-origin:0 0;">04/29/2021</div>
<div class="t" style="left:674px;top:347.84px;font-size:12px;color:#222222;transform:scaleX(0.974);transform-origin:0 0;">Spring Valley</div>
<div class="t" style="left:895px;top:347.84px;font-size:12px;color:#2a8de2;transform:scaleX(0.947);transform-origin:0 0;">Ready to Ship</div>
<div class="t" style="left:1139px;top:347.84px;font-size:12px;color:#7c7c7c;transform:scaleX(0.967);transform-origin:0 0;">Sent to Pick</div>
<div class="cb" style="left:463px;top:370px"></div>
<div class="t" style="left:492px;top:372.84px;font-size:12px;color:#17679f;transform:scaleX(0.896);transform-origin:0 0;">SO-0037735</div>
<div class="t" style="left:584px;top:372.84px;font-size:12px;color:#222222;transform:scaleX(1.024);transform-origin:0 0;">04/27/2021</div>
<div class="t" style="left:674px;top:372.84px;font-size:12px;color:#222222;transform:scaleX(0.974);transform-origin:0 0;">Spring Valley</div>
<div class="t" style="left:895px;top:372.84px;font-size:12px;color:#2a8de2;transform:scaleX(0.947);transform-origin:0 0;">Ready to Ship</div>
<div class="t" style="left:1279px;top:372.84px;font-size:12px;color:#0f5e99;font-weight:bold;transform:scaleX(0.907);transform-origin:0 0;">Past Due</div>
<div class="cb" style="left:463px;top:395px"></div>
<div class="t" style="left:492px;top:397.84px;font-size:12px;color:#17679f;transform:scaleX(0.896);transform-origin:0 0;">SO-0037736</div>
<div class="t" style="left:584px;top:397.84px;font-size:12px;color:#222222;transform:scaleX(1.024);transform-origin:0 0;">04/27/2021</div>
<div class="t" style="left:674px;top:397.84px;font-size:12px;color:#222222;transform:scaleX(0.974);transform-origin:0 0;">Spring Valley</div>
<div class="t" style="left:895px;top:397.84px;font-size:12px;color:#2a8de2;transform:scaleX(0.947);transform-origin:0 0;">Ready to Ship</div>
<div class="t" style="left:1139px;top:397.84px;font-size:12px;color:#7c7c7c;transform:scaleX(0.967);transform-origin:0 0;">Sent to Pick</div>
<div class="t" style="left:1279px;top:397.84px;font-size:12px;color:#0f5e99;font-weight:bold;transform:scaleX(0.907);transform-origin:0 0;">Past Due</div>
<div class="cb" style="left:463px;top:420px"></div>
<div class="t" style="left:492px;top:422.84px;font-size:12px;color:#17679f;transform:scaleX(0.896);transform-origin:0 0;">SO-0037721</div>
<div class="t" style="left:584px;top:422.84px;font-size:12px;color:#222222;transform:scaleX(1.024);transform-origin:0 0;">04/26/2021</div>
<div class="t" style="left:674px;top:422.84px;font-size:12px;color:#222222;transform:scaleX(0.974);transform-origin:0 0;">Amazon</div>
<div class="t" style="left:895px;top:422.84px;font-size:12px;color:#2a8de2;transform:scaleX(0.947);transform-origin:0 0;">Ready to Ship</div>
<div class="t" style="left:1279px;top:422.84px;font-size:12px;color:#0f5e99;font-weight:bold;transform:scaleX(0.907);transform-origin:0 0;">Past Due</div>
<div class="cb" style="left:463px;top:445px"></div>
<div class="t" style="left:492px;top:447.84px;font-size:12px;color:#17679f;transform:scaleX(0.896);transform-origin:0 0;">SO-0037655</div>
<div class="t" style="left:584px;top:447.84px;font-size:12px;color:#222222;transform:scaleX(1.024);transform-origin:0 0;">04/21/2021</div>
<div class="t" style="left:674px;top:447.84px;font-size:12px;color:#222222;transform:scaleX(0.974);transform-origin:0 0;">Spring Valley</div>
<div class="t" style="left:895px;top:447.84px;font-size:12px;color:#2a8de2;transform:scaleX(0.947);transform-origin:0 0;">Ready to Ship</div>
<div class="t" style="left:1139px;top:447.84px;font-size:12px;color:#7c7c7c;transform:scaleX(0.967);transform-origin:0 0;">Sent to Pick</div>
<div class="cb" style="left:463px;top:470px"></div>
<div class="t" style="left:492px;top:472.84px;font-size:12px;color:#17679f;transform:scaleX(0.896);transform-origin:0 0;">SO-0037676</div>
<div class="t" style="left:584px;top:472.84px;font-size:12px;color:#222222;transform:scaleX(1.024);transform-origin:0 0;">04/21/2021</div>
<div class="t" style="left:674px;top:472.84px;font-size:12px;color:#222222;transform:scaleX(0.974);transform-origin:0 0;">Spring Valley</div>
<div class="t" style="left:895px;top:472.84px;font-size:12px;color:#2a8de2;transform:scaleX(0.947);transform-origin:0 0;">Ready to Ship</div>
<div class="cb" style="left:463px;top:495px"></div>
<div class="t" style="left:492px;top:497.84px;font-size:12px;color:#17679f;transform:scaleX(0.896);transform-origin:0 0;">SO-0037640</div>
<div class="t" style="left:584px;top:497.84px;font-size:12px;color:#222222;transform:scaleX(1.024);transform-origin:0 0;">04/20/2021</div>
<div class="t" style="left:674px;top:497.84px;font-size:12px;color:#222222;transform:scaleX(0.974);transform-origin:0 0;">Spring Valley</div>
<div class="t" style="left:895px;top:497.84px;font-size:12px;color:#2a8de2;transform:scaleX(0.947);transform-origin:0 0;">Ready to Ship</div>
<div class="cb" style="left:463px;top:520px"></div>
<div class="t" style="left:492px;top:522.84px;font-size:12px;color:#17679f;transform:scaleX(0.896);transform-origin:0 0;">SO-0037646</div>
<div class="t" style="left:584px;top:522.84px;font-size:12px;color:#222222;transform:scaleX(1.024);transform-origin:0 0;">04/20/2021</div>
<div class="t" style="left:674px;top:522.84px;font-size:12px;color:#222222;transform:scaleX(0.974);transform-origin:0 0;">Spring Valley</div>
<div class="t" style="left:895px;top:522.84px;font-size:12px;color:#2a8de2;transform:scaleX(0.947);transform-origin:0 0;">Ready to Ship</div>
<div class="cb" style="left:463px;top:545px"></div>
<div class="t" style="left:492px;top:547.84px;font-size:12px;color:#17679f;transform:scaleX(0.896);transform-origin:0 0;">SO-0037650</div>
<div class="t" style="left:584px;top:547.84px;font-size:12px;color:#222222;transform:scaleX(1.024);transform-origin:0 0;">04/20/2021</div>
<div class="t" style="left:674px;top:547.84px;font-size:12px;color:#222222;transform:scaleX(0.974);transform-origin:0 0;">Spring Valley</div>
<div class="t" style="left:895px;top:547.84px;font-size:12px;color:#2a8de2;transform:scaleX(0.947);transform-origin:0 0;">Ready to Ship</div>
<div class="cb" style="left:463px;top:570px"></div>
<div class="t" style="left:492px;top:572.84px;font-size:12px;color:#17679f;transform:scaleX(0.896);transform-origin:0 0;">SO-0037622</div>
<div class="t" style="left:584px;top:572.84px;font-size:12px;color:#222222;transform:scaleX(1.024);transform-origin:0 0;">04/19/2021</div>
<div class="t" style="left:674px;top:572.84px;font-size:12px;color:#222222;transform:scaleX(0.974);transform-origin:0 0;">Spring Valley</div>
<div class="t" style="left:895px;top:572.84px;font-size:12px;color:#2a8de2;transform:scaleX(0.947);transform-origin:0 0;">Ready to Ship</div>
<div class="cb" style="left:463px;top:595px"></div>
<div class="t" style="left:492px;top:597.84px;font-size:12px;color:#17679f;transform:scaleX(0.896);transform-origin:0 0;">SO-0037628</div>
<div class="t" style="left:584px;top:597.84px;font-size:12px;color:#222222;transform:scaleX(1.024);transform-origin:0 0;">04/19/2021</div>
<div class="t" style="left:674px;top:597.84px;font-size:12px;color:#222222;transform:scaleX(0.974);transform-origin:0 0;">Spring Valley</div>
<div class="t" style="left:895px;top:597.84px;font-size:12px;color:#2a8de2;transform:scaleX(0.947);transform-origin:0 0;">Ready to Ship</div>
<div class="t" style="left:1139px;top:597.84px;font-size:12px;color:#7c7c7c;transform:scaleX(0.967);transform-origin:0 0;">Sent to Pick</div>
<div class="cb" style="left:463px;top:620px"></div>
<div class="t" style="left:492px;top:622.84px;font-size:12px;color:#17679f;transform:scaleX(0.896);transform-origin:0 0;">SO-0037607</div>
<div class="t" style="left:584px;top:622.84px;font-size:12px;color:#222222;transform:scaleX(1.024);transform-origin:0 0;">04/16/2021</div>
<div class="t" style="left:674px;top:622.84px;font-size:12px;color:#222222;transform:scaleX(0.974);transform-origin:0 0;">Spring Valley</div>
<div class="t" style="left:895px;top:622.84px;font-size:12px;color:#2a8de2;transform:scaleX(0.947);transform-origin:0 0;">Ready to Ship</div>
<div class="t" style="left:1139px;top:622.84px;font-size:12px;color:#7c7c7c;transform:scaleX(0.967);transform-origin:0 0;">Sent to Pick</div>
<div class="cb" style="left:463px;top:645px"></div>
<div class="t" style="left:492px;top:647.84px;font-size:12px;color:#17679f;transform:scaleX(0.896);transform-origin:0 0;">SO-0037608</div>
<div class="t" style="left:584px;top:647.84px;font-size:12px;color:#222222;transform:scaleX(1.024);transform-origin:0 0;">04/16/2021</div>
<div class="t" style="left:674px;top:647.84px;font-size:12px;color:#222222;transform:scaleX(0.974);transform-origin:0 0;">Spring Valley</div>
<div class="t" style="left:895px;top:647.84px;font-size:12px;color:#2a8de2;transform:scaleX(0.947);transform-origin:0 0;">Ready to Ship</div>
<div class="cb" style="left:463px;top:670px"></div>
<div class="t" style="left:492px;top:672.84px;font-size:12px;color:#17679f;transform:scaleX(0.896);transform-origin:0 0;">SO-0037504</div>
<div class="t" style="left:584px;top:672.84px;font-size:12px;color:#222222;transform:scaleX(1.024);transform-origin:0 0;">04/13/2021</div>
<div class="t" style="left:674px;top:672.84px;font-size:12px;color:#222222;transform:scaleX(0.974);transform-origin:0 0;">Spring Valley</div>
<div class="t" style="left:895px;top:672.84px;font-size:12px;color:#2a8de2;transform:scaleX(0.947);transform-origin:0 0;">Ready to Ship</div>
<div class="cb" style="left:463px;top:695px"></div>
<div class="t" style="left:492px;top:697.84px;font-size:12px;color:#17679f;transform:scaleX(0.896);transform-origin:0 0;">SO-0037469</div>
<div class="t" style="left:584px;top:697.84px;font-size:12px;color:#222222;transform:scaleX(1.024);transform-origin:0 0;">04/09/2021</div>
<div class="t" style="left:674px;top:697.84px;font-size:12px;color:#222222;transform:scaleX(0.974);transform-origin:0 0;">Spring Valley</div>
<div class="t" style="left:895px;top:697.84px;font-size:12px;color:#2a8de2;transform:scaleX(0.947);transform-origin:0 0;">Ready to Ship</div>
<div class="t" style="left:1139px;top:697.84px;font-size:12px;color:#7c7c7c;transform:scaleX(0.967);transform-origin:0 0;">Sent to Pick</div>
<div class="cb" style="left:463px;top:720px"></div>
<div class="t" style="left:492px;top:722.84px;font-size:12px;color:#17679f;transform:scaleX(0.896);transform-origin:0 0;">SO-0037455</div>
<div class="t" style="left:584px;top:722.84px;font-size:12px;color:#222222;transform:scaleX(1.024);transform-origin:0 0;">04/09/2021</div>
<div class="t" style="left:674px;top:722.84px;font-size:12px;color:#222222;transform:scaleX(0.974);transform-origin:0 0;">Spring Valley</div>
<div class="t" style="left:895px;top:722.84px;font-size:12px;color:#2a8de2;transform:scaleX(0.947);transform-origin:0 0;">Ready to Ship</div>
<div class="t" style="left:1139px;top:722.84px;font-size:12px;color:#2a8de2;transform:scaleX(0.947);transform-origin:0 0;">Picked</div>
<div class="cb" style="left:463px;top:745px"></div>
<div class="t" style="left:492px;top:747.84px;font-size:12px;color:#17679f;transform:scaleX(0.896);transform-origin:0 0;">SO-0037435</div>
<div class="t" style="left:584px;top:747.84px;font-size:12px;color:#222222;transform:scaleX(1.024);transform-origin:0 0;">04/08/2021</div>
<div class="t" style="left:674px;top:747.84px;font-size:12px;color:#222222;transform:scaleX(0.974);transform-origin:0 0;">Spring Valley</div>
<div class="t" style="left:895px;top:747.84px;font-size:12px;color:#2a8de2;transform:scaleX(0.947);transform-origin:0 0;">Ready to Ship</div>
<div class="t" style="left:1139px;top:747.84px;font-size:12px;color:#7c7c7c;transform:scaleX(0.967);transform-origin:0 0;">Sent to Pick</div>
<div class="t" style="left:1279px;top:747.84px;font-size:12px;color:#0f5e99;font-weight:bold;transform:scaleX(0.907);transform-origin:0 0;">Past Due</div>
<div class="t" style="left:1805px;top:747.84px;font-size:12px;color:#333333;transform:scaleX(0.954);transform-origin:0 0;">PO-0013209</div>
<div class="cb" style="left:463px;top:770px"></div>
<div class="t" style="left:492px;top:772.84px;font-size:12px;color:#17679f;transform:scaleX(0.896);transform-origin:0 0;">SO-0037379</div>
<div class="t" style="left:584px;top:772.84px;font-size:12px;color:#222222;transform:scaleX(1.024);transform-origin:0 0;">04/07/2021</div>
<div class="t" style="left:674px;top:772.84px;font-size:12px;color:#222222;transform:scaleX(0.974);transform-origin:0 0;">Spring Valley</div>
<div class="t" style="left:895px;top:772.84px;font-size:12px;color:#2a8de2;transform:scaleX(0.947);transform-origin:0 0;">Ready to Ship</div>
<div class="cb" style="left:463px;top:795px"></div>
<div class="t" style="left:492px;top:797.84px;font-size:12px;color:#17679f;transform:scaleX(0.896);transform-origin:0 0;">SO-0037315</div>
<div class="t" style="left:584px;top:797.84px;font-size:12px;color:#222222;transform:scaleX(1.024);transform-origin:0 0;">04/05/2021</div>
<div class="t" style="left:674px;top:797.84px;font-size:12px;color:#222222;transform:scaleX(0.974);transform-origin:0 0;">Spring Valley</div>
<div class="t" style="left:895px;top:797.84px;font-size:12px;color:#2a8de2;transform:scaleX(0.947);transform-origin:0 0;">Ready to Ship</div>
<div class="t" style="left:1805px;top:797.84px;font-size:12px;color:#333333;transform:scaleX(0.954);transform-origin:0 0;">PO-0013289-D</div>
<div class="cb" style="left:463px;top:820px"></div>
<div class="t" style="left:492px;top:822.84px;font-size:12px;color:#17679f;transform:scaleX(0.896);transform-origin:0 0;">SO-0037323</div>
<div class="t" style="left:584px;top:822.84px;font-size:12px;color:#222222;transform:scaleX(1.024);transform-origin:0 0;">04/06/2021</div>
<div class="t" style="left:674px;top:822.84px;font-size:12px;color:#222222;transform:scaleX(0.974);transform-origin:0 0;">Spring Valley</div>
<div class="t" style="left:895px;top:822.84px;font-size:12px;color:#2a8de2;transform:scaleX(0.947);transform-origin:0 0;">Ready to Ship</div>
<div class="t" style="left:1139px;top:822.84px;font-size:12px;color:#7c7c7c;transform:scaleX(0.967);transform-origin:0 0;">Sent to Pick</div>
<div class="t" style="left:1805px;top:822.84px;font-size:12px;color:#333333;transform:scaleX(0.954);transform-origin:0 0;">PO-0013322</div>
<div class="cb" style="left:463px;top:845px"></div>
<div class="t" style="left:492px;top:847.84px;font-size:12px;color:#17679f;transform:scaleX(0.896);transform-origin:0 0;">SO-0037298</div>
<div class="t" style="left:584px;top:847.84px;font-size:12px;color:#222222;transform:scaleX(1.024);transform-origin:0 0;">04/05/2021</div>
<div class="t" style="left:674px;top:847.84px;font-size:12px;color:#222222;transform:scaleX(0.974);transform-origin:0 0;">Spring Valley</div>
<div class="t" style="left:895px;top:847.84px;font-size:12px;color:#2a8de2;transform:scaleX(0.947);transform-origin:0 0;">Ready to Ship</div>
<div class="t" style="left:1139px;top:847.84px;font-size:12px;color:#7c7c7c;transform:scaleX(0.967);transform-origin:0 0;">Sent to Pick</div>
<div class="t" style="left:1805px;top:847.84px;font-size:12px;color:#333333;transform:scaleX(0.954);transform-origin:0 0;">PO-0013121</div>
<div class="cb" style="left:463px;top:870px"></div>
<div class="t" style="left:492px;top:872.84px;font-size:12px;color:#17679f;transform:scaleX(0.896);transform-origin:0 0;">SO-0037299</div>
<div class="t" style="left:584px;top:872.84px;font-size:12px;color:#222222;transform:scaleX(1.024);transform-origin:0 0;">04/05/2021</div>
<div class="t" style="left:674px;top:872.84px;font-size:12px;color:#222222;transform:scaleX(0.974);transform-origin:0 0;">Spring Valley</div>
<div class="t" style="left:895px;top:872.84px;font-size:12px;color:#2a8de2;transform:scaleX(0.947);transform-origin:0 0;">Ready to Ship</div>
<div class="cb" style="left:463px;top:895px"></div>
<div class="t" style="left:492px;top:897.84px;font-size:12px;color:#17679f;transform:scaleX(0.896);transform-origin:0 0;">SO-0037309</div>
<div class="t" style="left:584px;top:897.84px;font-size:12px;color:#222222;transform:scaleX(1.024);transform-origin:0 0;">04/05/2021</div>
<div class="t" style="left:674px;top:897.84px;font-size:12px;color:#222222;transform:scaleX(0.974);transform-origin:0 0;">Spring Valley</div>
<div class="t" style="left:895px;top:897.84px;font-size:12px;color:#2a8de2;transform:scaleX(0.947);transform-origin:0 0;">Ready to Ship</div>
<div class="cb" style="left:463px;top:920px"></div>
<div class="t" style="left:492px;top:922.84px;font-size:12px;color:#17679f;transform:scaleX(0.896);transform-origin:0 0;">SO-0037342</div>
<div class="t" style="left:584px;top:922.84px;font-size:12px;color:#222222;transform:scaleX(1.024);transform-origin:0 0;">04/06/2021</div>
<div class="t" style="left:674px;top:922.84px;font-size:12px;color:#222222;transform:scaleX(0.974);transform-origin:0 0;">Spring Valley</div>
<div class="t" style="left:895px;top:922.84px;font-size:12px;color:#2a8de2;transform:scaleX(0.947);transform-origin:0 0;">Ready to Ship</div>
<div class="t" style="left:1805px;top:922.84px;font-size:12px;color:#333333;transform:scaleX(0.954);transform-origin:0 0;">PO-0013257</div>
<div class="cb" style="left:463px;top:945px"></div>
<div class="t" style="left:492px;top:947.84px;font-size:12px;color:#17679f;transform:scaleX(0.896);transform-origin:0 0;">SO-0037349</div>
<div class="t" style="left:584px;top:947.84px;font-size:12px;color:#222222;transform:scaleX(1.024);transform-origin:0 0;">04/06/2021</div>
<div class="t" style="left:674px;top:947.84px;font-size:12px;color:#222222;transform:scaleX(0.974);transform-origin:0 0;">Spring Valley</div>
<div class="t" style="left:895px;top:947.84px;font-size:12px;color:#2a8de2;transform:scaleX(0.947);transform-origin:0 0;">Ready to Ship</div>
<div class="cb" style="left:463px;top:970px"></div>
<div class="t" style="left:492px;top:972.84px;font-size:12px;color:#17679f;transform:scaleX(0.896);transform-origin:0 0;">SO-0037357</div>
<div class="t" style="left:584px;top:972.84px;font-size:12px;color:#222222;transform:scaleX(1.024);transform-origin:0 0;">04/06/2021</div>
<div class="t" style="left:674px;top:972.84px;font-size:12px;color:#222222;transform:scaleX(0.974);transform-origin:0 0;">ktest-store</div>
<div class="t" style="left:895px;top:972.84px;font-size:12px;color:#2a8de2;transform:scaleX(0.947);transform-origin:0 0;">Ready to Ship</div>
<div class="t" style="left:1139px;top:972.84px;font-size:12px;color:#2a8de2;transform:scaleX(0.947);transform-origin:0 0;">Picked</div>
<div class="a" style="left:1909px;top:160px;width:7px;height:541px;background:#d9d9d9;"></div>
<svg class="a" style="left:1907px;top:983px" width="10" height="6" viewBox="0 0 10 6"><path d="M1 1 L5 5 L9 1" fill="none" stroke="#dadada" stroke-width="1"/></svg>
<div class="a" style="left:477px;top:1005px;width:90px;height:25px;background:#cacaca;"></div>
<div class="t" style="left:490.83px;top:1012.69px;font-size:11px;color:#ffffff;transform:scaleX(0.998);transform-origin:50% 0;">PICK ITEMS</div>
<div class="a" style="left:577px;top:1005px;width:109px;height:25px;background:#cacaca;"></div>
<div class="t" style="left:590.34px;top:1012.69px;font-size:11px;color:#ffffff;transform:scaleX(0.998);transform-origin:50% 0;">ASSIGN TRUCK</div>
<div class="a" style="left:696px;top:1005px;width:104px;height:25px;background:#cacaca;"></div>
<div class="t" style="left:709.39px;top:1012.69px;font-size:11px;color:#ffffff;transform:scaleX(0.998);transform-origin:50% 0;">SEND TO PICK</div>
<div class="a" style="left:810px;top:1005px;width:134px;height:25px;background:#0b5b95;"></div>
<div class="t" style="left:824.74px;top:1012.69px;font-size:11px;color:#ffffff;transform:scaleX(0.998);transform-origin:50% 0;">ADD LANDED COST</div>
<div class="a" style="left:1732px;top:1005px;width:75px;height:25px;background:#cacaca;"></div>
<div class="t" style="left:1756.66px;top:1012.69px;font-size:11px;color:#ffffff;transform:scaleX(0.998);transform-origin:50% 0;">SHIP</div>
<div class="a" style="left:1817px;top:1005px;width:87px;height:25px;background:#cacaca;"></div>
<div class="t" style="left:1830.55px;top:1012.69px;font-size:11px;color:#ffffff;transform:scaleX(0.998);transform-origin:50% 0;">SCHEDULE</div>
<svg class="a" style="left:1786px;top:131.5px" width="19" height="17" viewBox="0 0 19 17">
<rect x="3.8" y="0" width="10.2" height="3.2" fill="#c9c9c9"/>
<path d="M0 6 Q0 4 2 4 H16 Q18 4 18 6 V11.8 H14.2 V9.5 H3.6 V11.8 H0 Z" fill="#c9c9c9"/>
<path d="M3.5 9 H14.2 V15.8 H3.5 Z M5 9.5 V14.3 H12.7 V9.5 Z" fill="#c9c9c9" fill-rule="evenodd"/>
<circle cx="16.2" cy="6.8" r="0.9" fill="#fff"/>
</svg>
<svg class="a" style="left:1784px;top:128px" width="12" height="12" viewBox="0 0 12 12"><circle cx="6.3" cy="6.5" r="4.8" fill="#fff" stroke="#c9c9c9" stroke-width="1"/><path d="M7 3.2 L4.9 6.9 H6.4 L5.6 9.6 L7.8 5.8 H6.3 Z" fill="#c9c9c9"/></svg>
<svg class="a" style="left:1820px;top:131.5px" width="19" height="17" viewBox="0 0 19 17">
<rect x="3.8" y="0" width="10.2" height="3.2" fill="#c9c9c9"/>
<path d="M0 6 Q0 4 2 4 H16 Q18 4 18 6 V11.8 H14.2 V9.5 H3.6 V11.8 H0 Z" fill="#c9c9c9"/>
<path d="M3.5 9 H14.2 V15.8 H3.5 Z M5 9.5 V14.3 H12.7 V9.5 Z" fill="#c9c9c9" fill-rule="evenodd"/>
<circle cx="16.2" cy="6.8" r="0.9" fill="#fff"/>
</svg>
<div class="a" style="left:1841.5px;top:137px;width:0;height:0;border-left:4px solid transparent;border-right:4px solid transparent;border-top:4px solid #0b5e9a"></div>
<svg class="a" style="left:1858px;top:130px" width="20" height="19" viewBox="0 0 20 19">
<path d="M5.8 7 V2.2 Q5.8 1 7 1 H14 L18.3 5.3 V16.8 Q18.3 18 17.1 18 H7 Q5.8 18 5.8 16.8 V15.2" fill="none" stroke="#0b5e9a" stroke-width="1.5"/>
<path d="M13.6 1 L18.3 5.7 H13.6 Z" fill="#0b5e9a"/>
<rect x="8.9" y="8.3" width="3.4" height="1.9" fill="#0b5e9a"/><rect x="13.2" y="8.3" width="3.2" height="1.9" fill="#0b5e9a"/>
<rect x="8.9" y="11" width="3.4" height="1.9" fill="#0b5e9a"/><rect x="13.2" y="11" width="3.2" height="1.9" fill="#0b5e9a"/>
<rect x="8.9" y="13.6" width="3.4" height="1.9" fill="#0b5e9a"/><rect x="13.2" y="13.6" width="3.2" height="1.9" fill="#0b5e9a"/>
<path d="M1.3 7.8 L6.2 14.5 M6.2 7.8 L1.3 14.5" stroke="#0b5e9a" stroke-width="1.7"/>
</svg>
<svg class="a" style="left:1890px;top:129.5px" width="20" height="20" viewBox="0 0 20 20"><path d="M8.00 3.29 L8.00 0.97 L12.00 0.97 L12.00 3.29 A7.0 7.0 0 0 1 14.81 4.91 L16.82 3.75 L18.82 7.22 L16.81 8.38 A7.0 7.0 0 0 1 16.81 11.62 L18.82 12.78 L16.82 16.25 L14.81 15.09 A7.0 7.0 0 0 1 12.00 16.71 L12.00 19.03 L8.00 19.03 L8.00 16.71 A7.0 7.0 0 0 1 5.19 15.09 L3.18 16.25 L1.18 12.78 L3.19 11.62 A7.0 7.0 0 0 1 3.19 8.38 L1.18 7.22 L3.18 3.75 L5.19 4.91 A7.0 7.0 0 0 1 8.00 3.29 Z M10 6.6 A3.4 3.4 0 1 0 10 13.4 A3.4 3.4 0 1 0 10 6.6 Z" fill="#0b5e9a" fill-rule="evenodd" stroke="#0b5e9a" stroke-width="0.4" stroke-linejoin="round"/></svg>
<div class="a" style="left:1793px;top:155px;width:127px;height:493px;background:#fff;border:1px solid #a7acb6"></div>
<div class="t" style="left:1798px;top:165.84px;font-size:12px;color:#1e1e1e;transform:scaleX(0.969);transform-origin:0 0;">Order #</div>
<div class="a cbx" style="left:1897px;top:163px"><svg width="18" height="18" viewBox="0 0 18 18" style="position:absolute;left:0;top:0"><path d="M2.6 9.1 L7.1 13.2 L15.2 4.6" fill="none" stroke="#fff" stroke-width="2"/></svg></div>
<div class="t" style="left:1798px;top:188.84px;font-size:12px;color:#1e1e1e;transform:scaleX(0.969);transform-origin:0 0;">Order Date</div>
<div class="a cbx" style="left:1897px;top:186px"><svg width="18" height="18" viewBox="0 0 18 18" style="position:absolute;left:0;top:0"><path d="M2.6 9.1 L7.1 13.2 L15.2 4.6" fill="none" stroke="#fff" stroke-width="2"/></svg></div>
<div class="t" style="left:1798px;top:211.84px;font-size:12px;color:#1e1e1e;transform:scaleX(0.969);transform-origin:0 0;">Customer PO</div>
<div class="a cb" style="left:1897px;top:209px"></div>
<div class="t" style="left:1798px;top:234.84px;font-size:12px;color:#1e1e1e;transform:scaleX(0.969);transform-origin:0 0;">SHO#</div>
<div class="a cb" style="left:1897px;top:232px"></div>
<div class="t" style="left:1798px;top:257.84px;font-size:12px;color:#1e1e1e;transform:scaleX(0.969);transform-origin:0 0;">Ship Date</div>
<div class="a cb" style="left:1897px;top:255px"></div>
<div class="t" style="left:1798px;top:280.84px;font-size:12px;color:#1e1e1e;transform:scaleX(0.969);transform-origin:0 0;">Customer</div>
<div class="a cb" style="left:1897px;top:278px"></div>
<div class="t" style="left:1798px;top:303.84px;font-size:12px;color:#1e1e1e;transform:scaleX(0.969);transform-origin:0 0;">Store</div>
<div class="a cbx" style="left:1897px;top:301px"><svg width="18" height="18" viewBox="0 0 18 18" style="position:absolute;left:0;top:0"><path d="M2.6 9.1 L7.1 13.2 L15.2 4.6" fill="none" stroke="#fff" stroke-width="2"/></svg></div>
<div class="t" style="left:1798px;top:326.84px;font-size:12px;color:#1e1e1e;transform:scaleX(0.969);transform-origin:0 0;">Total</div>
<div class="a cb" style="left:1897px;top:324px"></div>
<div class="t" style="left:1798px;top:349.84px;font-size:12px;color:#1e1e1e;transform:scaleX(0.969);transform-origin:0 0;">Ship To</div>
<div class="a cb" style="left:1897px;top:347px"></div>
<div class="t" style="left:1798px;top:372.84px;font-size:12px;color:#1e1e1e;transform:scaleX(0.969);transform-origin:0 0;">Pre-Shipping</div>
<div class="a cb" style="left:1897px;top:370px"></div>
<div class="t" style="left:1798px;top:395.84px;font-size:12px;color:#1e1e1e;transform:scaleX(0.969);transform-origin:0 0;">Confirm.</div>
<div class="a cb" style="left:1897px;top:393px"></div>
<div class="t" style="left:1798px;top:418.84px;font-size:12px;color:#1e1e1e;transform:scaleX(0.969);transform-origin:0 0;">Zone</div>
<div class="a cb" style="left:1897px;top:416px"></div>
<div class="t" style="left:1798px;top:441.84px;font-size:12px;color:#1e1e1e;transform:scaleX(0.969);transform-origin:0 0;">Truck</div>
<div class="a cbx" style="left:1897px;top:439px"><svg width="18" height="18" viewBox="0 0 18 18" style="position:absolute;left:0;top:0"><path d="M2.6 9.1 L7.1 13.2 L15.2 4.6" fill="none" stroke="#fff" stroke-width="2"/></svg></div>
<div class="t" style="left:1798px;top:464.84px;font-size:12px;color:#1e1e1e;transform:scaleX(0.969);transform-origin:0 0;">Order Status</div>
<div class="a cbx" style="left:1897px;top:462px"><svg width="18" height="18" viewBox="0 0 18 18" style="position:absolute;left:0;top:0"><path d="M2.6 9.1 L7.1 13.2 L15.2 4.6" fill="none" stroke="#fff" stroke-width="2"/></svg></div>
<div class="t" style="left:1798px;top:487.84px;font-size:12px;color:#1e1e1e;transform:scaleX(0.969);transform-origin:0 0;">Inventory Status</div>
<div class="a cbx" style="left:1897px;top:485px"><svg width="18" height="18" viewBox="0 0 18 18" style="position:absolute;left:0;top:0"><path d="M2.6 9.1 L7.1 13.2 L15.2 4.6" fill="none" stroke="#fff" stroke-width="2"/></svg></div>
<div class="t" style="left:1798px;top:510.84px;font-size:12px;color:#1e1e1e;transform:scaleX(0.969);transform-origin:0 0;">Picked Status</div>
<div class="a cbx" style="left:1897px;top:508px"><svg width="18" height="18" viewBox="0 0 18 18" style="position:absolute;left:0;top:0"><path d="M2.6 9.1 L7.1 13.2 L15.2 4.6" fill="none" stroke="#fff" stroke-width="2"/></svg></div>
<div class="t" style="left:1798px;top:533.84px;font-size:12px;color:#1e1e1e;transform:scaleX(0.969);transform-origin:0 0;">Credit Hold</div>
<div class="a cbx" style="left:1897px;top:531px"><svg width="18" height="18" viewBox="0 0 18 18" style="position:absolute;left:0;top:0"><path d="M2.6 9.1 L7.1 13.2 L15.2 4.6" fill="none" stroke="#fff" stroke-width="2"/></svg></div>
<div class="t" style="left:1798px;top:556.84px;font-size:12px;color:#1e1e1e;transform:scaleX(0.969);transform-origin:0 0;">Brand</div>
<div class="a cbx" style="left:1897px;top:554px"><svg width="18" height="18" viewBox="0 0 18 18" style="position:absolute;left:0;top:0"><path d="M2.6 9.1 L7.1 13.2 L15.2 4.6" fill="none" stroke="#fff" stroke-width="2"/></svg></div>
<div class="t" style="left:1798px;top:579.84px;font-size:12px;color:#1e1e1e;transform:scaleX(0.969);transform-origin:0 0;">Category</div>
<div class="a cbx" style="left:1897px;top:577px"><svg width="18" height="18" viewBox="0 0 18 18" style="position:absolute;left:0;top:0"><path d="M2.6 9.1 L7.1 13.2 L15.2 4.6" fill="none" stroke="#fff" stroke-width="2"/></svg></div>
<div class="t" style="left:1798px;top:602.84px;font-size:12px;color:#1e1e1e;transform:scaleX(0.969);transform-origin:0 0;">Invent. Avail</div>
<div class="a cbx" style="left:1897px;top:600px"><svg width="18" height="18" viewBox="0 0 18 18" style="position:absolute;left:0;top:0"><path d="M2.6 9.1 L7.1 13.2 L15.2 4.6" fill="none" stroke="#fff" stroke-width="2"/></svg></div>
<div class="t" style="left:1798px;top:625.84px;font-size:12px;color:#1e1e1e;transform:scaleX(0.969);transform-origin:0 0;">Purchase Order #</div>
<div class="a cbx" style="left:1897px;top:623px"><svg width="18" height="18" viewBox="0 0 18 18" style="position:absolute;left:0;top:0"><path d="M2.6 9.1 L7.1 13.2 L15.2 4.6" fill="none" stroke="#fff" stroke-width="2"/></svg></div>
<div class="a" style="left:1017px;top:144px;width:119px;height:59px;border:4px solid #fb5747;box-shadow:2px 2px 2px rgba(0,0,0,0.75), inset 2px 2px 2px rgba(0,0,0,0.75)"></div>
<svg class="a" style="left:1680px;top:470px;overflow:visible" width="130" height="45" viewBox="0 0 130 45">
<defs><filter id="sh" x="-20%" y="-50%" width="140%" height="200%"><feGaussianBlur in="SourceAlpha" stdDeviation="1"/><feOffset dx="1.8" dy="2.2"/><feComponentTransfer><feFuncA type="linear" slope="0.85"/></feComponentTransfer><feMerge><feMergeNode/><feMergeNode in="SourceGraphic"/></feMerge></filter></defs>
<path filter="url(#sh)" d="M15.1 27.1 L99.2 17.5 L97.4 11.7 L114.1 18.6 L99.9 30.6 L99.2 25.9 L16.3 37.1 A5 5 0 0 1 15.1 27.1 Z" fill="#fb5747" stroke="#fb5747" stroke-width="0.8" stroke-linejoin="round"/>
</svg>
</body></html>
